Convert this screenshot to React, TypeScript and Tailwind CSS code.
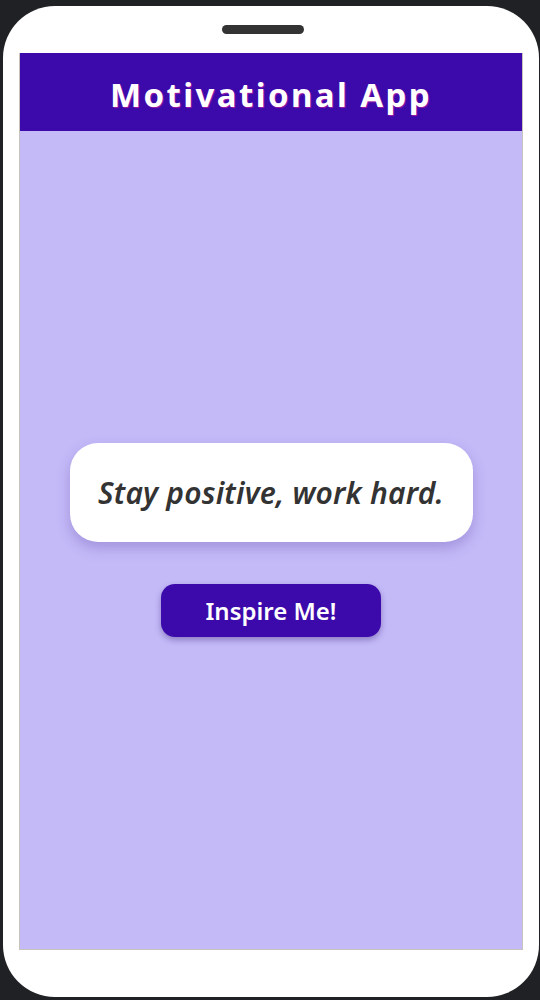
export default function App() {
  return (
    <div className="h-[1000px] w-[540px] overflow-hidden bg-[#202124] pl-[3px] pt-[6px] font-['Noto_Sans','Open_Sans',sans-serif]">
      <div className="flex h-[991px] w-[536px] flex-col rounded-[52px] bg-white">
        <div className="flex h-[47px] items-center pl-[219px]">
          <div className="h-[9px] w-[82px] rounded-full bg-[#333333]" />
        </div>
        <div className="ml-[16px] flex h-[897px] w-[504px] flex-col border-b border-l border-r border-[#c8c4bc]">
          <header className="flex h-[78px] items-center justify-center bg-[#3c09ab] pt-[5px]">
            <h1 className="text-[33px] font-bold tracking-[2.4px] text-white [text-shadow:1px_1px_1px_rgba(230,40,160,0.6)]">
              Motivational App
            </h1>
          </header>
          <main className="flex flex-1 flex-col items-center justify-center bg-[#c4baf8]">
            <div className="flex h-[99px] w-[403px] items-center justify-center rounded-[28px] bg-white shadow-[0_6px_14px_rgba(60,30,140,0.25)]">
              <p className="text-[30px] font-semibold italic tracking-[0.2px] text-[#333333]">Stay positive, work hard.</p>
            </div>
            <button
              type="button"
              className="mt-[42px] h-[53px] w-[220px] rounded-[14px] bg-[#3c09ab] text-[24px] font-semibold text-white shadow-[0_3px_6px_rgba(40,10,100,0.35)]"
            >
              Inspire Me!
            </button>
          </main>
        </div>
      </div>
    </div>
  );
}
